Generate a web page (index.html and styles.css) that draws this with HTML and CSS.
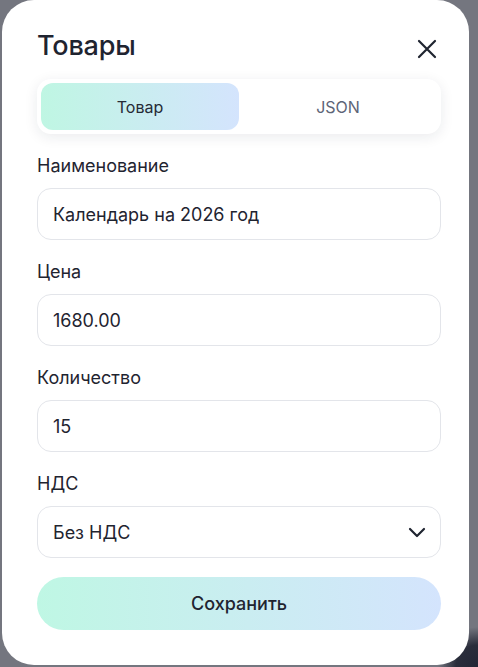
FILE: index.html
```html
<!DOCTYPE html>
<html lang="ru">
<head>
<meta charset="utf-8">
<title>Товары</title>
<link rel="stylesheet" href="styles.css">
</head>
<body>
<div class="modal">
  <div class="header">
    <h1 class="title">Товары</h1>
    <button class="close" aria-label="Закрыть">
      <svg width="20" height="20" viewBox="0 0 20 20"><path d="M2 2 L18 18 M18 2 L2 18" stroke="#1f2430" stroke-width="2.2" stroke-linecap="round" fill="none"/></svg>
    </button>
  </div>
  <div class="tabs">
    <div class="tab active">Товар</div>
    <div class="tab">JSON</div>
  </div>
  <div class="field">
    <div class="label">Наименование</div>
    <div class="input">Календарь на 2026 год</div>
  </div>
  <div class="field">
    <div class="label">Цена</div>
    <div class="input">1680.00</div>
  </div>
  <div class="field">
    <div class="label">Количество</div>
    <div class="input">15</div>
  </div>
  <div class="field">
    <div class="label">НДС</div>
    <div class="input select">
      <span>Без НДС</span>
      <svg width="18" height="12" viewBox="0 0 18 12"><path d="M2 3 L9 10 L16 3" stroke="#1f2430" stroke-width="2.2" stroke-linecap="round" stroke-linejoin="round" fill="none"/></svg>
    </div>
  </div>
  <button class="save">Сохранить</button>
</div>
</body>
</html>
```
FILE: styles.css
```css
html, body {
  margin: 0;
  padding: 0;
}
body {
  width: 478px;
  height: 667px;
  overflow: hidden;
  background: radial-gradient(circle at 100% 100%, #232636 0, #2a2d3b 22px, rgba(116,118,127,0) 40px), #74767f;
  font-family: Inter, "Noto Sans", sans-serif;
  color: #1f2430;
}
.modal {
  margin-left: 2px;
  width: 467px;
  height: 665px;
  box-sizing: border-box;
  background: #fff;
  border-radius: 32px;
  padding: 28px 28px 0 35px;
  display: flex;
  flex-direction: column;
}
.header {
  display: flex;
  align-items: center;
  justify-content: space-between;
  height: 34px;
  margin-bottom: 17px;
}
.title {
  margin: 0;
  font-size: 27px;
  font-weight: 500;
  letter-spacing: -0.2px;
  color: #1f2430;
}
.close {
  border: 0;
  background: none;
  padding: 0;
  width: 20px;
  height: 20px;
  margin-right: 4px;
  margin-top: 8px;
  display: flex;
}
.tabs {
  display: flex;
  height: 55px;
  box-sizing: border-box;
  padding: 4px;
  border-radius: 14px;
  background: #fff;
  box-shadow: 0 3px 14px rgba(20, 30, 50, 0.09);
  margin-bottom: 20px;
}
.tab {
  flex: 1;
  display: flex;
  align-items: center;
  justify-content: center;
  font-size: 16px;
  color: #5d6577;
  border-radius: 12px;
}
.tab.active {
  background: linear-gradient(90deg, #bff6e3 0%, #d4e4fd 100%);
  color: #262b36;
}
.field {
  display: flex;
  flex-direction: column;
  margin-bottom: 20px;
}
.label {
  font-size: 18px;
  line-height: 24px;
  margin-bottom: 10px;
  color: #1f2430;
}
.input {
  height: 52px;
  box-sizing: border-box;
  border: 1px solid #e3e5ea;
  border-radius: 14px;
  padding: 0 15px;
  display: flex;
  align-items: center;
  font-size: 18px;
  color: #1f2430;
}
.select {
  justify-content: space-between;
  padding-right: 14px;
}
.save {
  margin-top: -1px;
  height: 53px;
  border: 0;
  border-radius: 27px;
  background: linear-gradient(90deg, #bff7e4 0%, #d4e4fd 100%);
  font-family: Inter, "Noto Sans", sans-serif;
  font-size: 18px;
  font-weight: 500;
  color: #1f2430;
}
```
